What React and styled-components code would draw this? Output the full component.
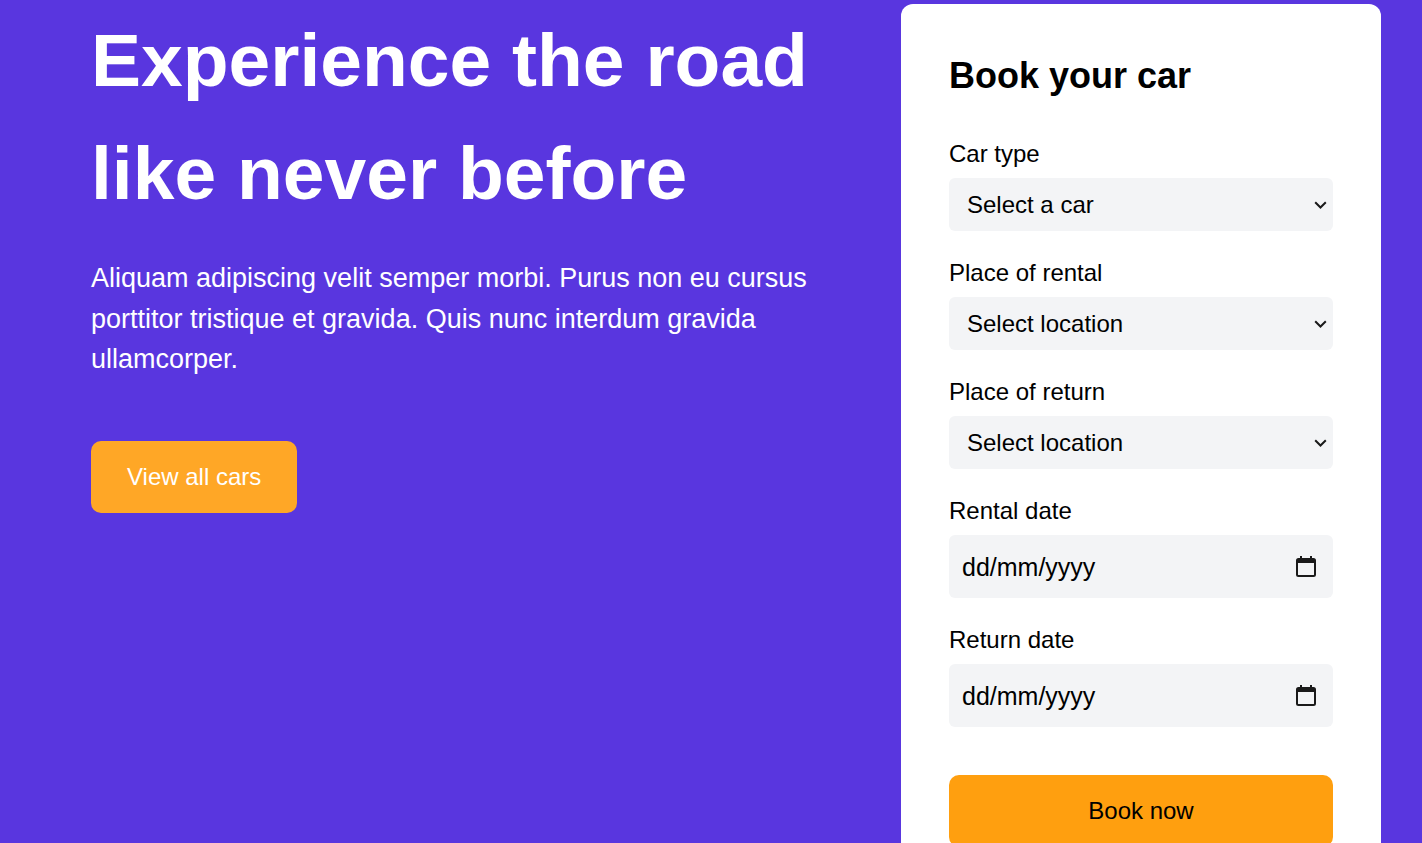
import React from "react";
import styled, { createGlobalStyle } from "styled-components";

const GlobalStyle = createGlobalStyle`
  * { box-sizing: border-box; }
  html, body { margin: 0; padding: 0; }
  body {
    background: #5936df;
    font-family: "Liberation Sans", Arial, sans-serif;
    overflow: hidden;
  }
`;

const Page = styled.main`
  display: flex;
  align-items: flex-start;
  gap: 90px;
  min-height: 843px;
  padding: 4px 41px 0 91px;
  background: #5936df;
`;

const Hero = styled.section`
  flex: 1;
  min-width: 0;
  color: #ffffff;
`;

const Headline = styled.h1`
  margin: 0;
  font-size: 75px;
  font-weight: 700;
  line-height: 1.5;
`;

const Lead = styled.p`
  margin: 29px 0 0;
  font-size: 27px;
  line-height: 40.5px;
`;

const Button = styled.button`
  display: block;
  border: none;
  border-radius: 10px;
  padding: 24px 36px;
  font-family: inherit;
  font-size: 24px;
  line-height: 24px;
  cursor: pointer;
  color: ${(p) => (p.$dark ? "#000000" : "#ffffff")};
  background: ${(p) => (p.$dark ? "#ff9f0f" : "#ffa726")};
  width: ${(p) => (p.$full ? "100%" : "auto")};
  margin-top: ${(p) => p.$mt || 0}px;
`;

const Card = styled.form`
  flex: 0 0 480px;
  background: #ffffff;
  border-radius: 12px;
  padding: 48px 48px 40px;
  min-height: 860px;
`;

const CardTitle = styled.h2`
  margin: 0 0 37px;
  font-size: 36px;
  font-weight: 700;
  line-height: 48px;
  color: #000000;
`;

const Fields = styled.div`
  display: flex;
  flex-direction: column;
  gap: 25px;
`;

const Field = styled.div`
  display: flex;
  flex-direction: column;
`;

const Label = styled.label`
  display: block;
  margin-bottom: 8px;
  font-size: 24px;
  line-height: 33px;
  color: #000000;
`;

const Control = styled.div`
  position: relative;
  display: flex;
  align-items: center;
  height: ${(p) => p.$h}px;
  border-radius: 6px;
  background: #f3f4f6;
`;

const Select = styled.select`
  appearance: none;
  -webkit-appearance: none;
  width: 100%;
  height: 100%;
  border: none;
  outline: none;
  background: transparent;
  padding: 0 40px 0 18px;
  font-family: inherit;
  font-size: 24px;
  color: #000000;
`;

const Chevron = styled.svg`
  position: absolute;
  right: 6px;
  top: 50%;
  transform: translateY(-50%);
  pointer-events: none;
`;

const DateText = styled.span`
  flex: 1;
  padding: 2px 0 0 13px;
  font-size: 25px;
  color: #000000;
`;

const CalendarIcon = styled.svg`
  margin-right: 17px;
  flex-shrink: 0;
`;

function SelectField({ label, placeholder }) {
  return (
    <Field>
      <Label>{label}</Label>
      <Control $h={53}>
        <Select defaultValue="">
          <option value="">{placeholder}</option>
        </Select>
        <Chevron width="13" height="8" viewBox="0 0 13 8" fill="none">
          <path d="M1.2 1.2 L6.5 6.5 L11.8 1.2" stroke="#1a1a1a" strokeWidth="2" />
        </Chevron>
      </Control>
    </Field>
  );
}

function DateField({ label }) {
  return (
    <Field>
      <Label>{label}</Label>
      <Control $h={63}>
        <DateText>dd/mm/yyyy</DateText>
        <CalendarIcon width="20" height="21" viewBox="0 0 20 21">
          <rect x="4" y="0" width="2" height="4" fill="#1a1a1a" />
          <rect x="14" y="0" width="2" height="4" fill="#1a1a1a" />
          <rect x="1" y="3" width="18" height="17" rx="1.5" fill="none" stroke="#1a1a1a" strokeWidth="2" />
          <rect x="1" y="3" width="18" height="4" fill="#1a1a1a" />
        </CalendarIcon>
      </Control>
    </Field>
  );
}

export default function App() {
  return (
    <>
      <GlobalStyle />
      <Page>
        <Hero>
          <Headline>Experience the road like never before</Headline>
          <Lead>
            Aliquam adipiscing velit semper morbi. Purus non eu cursus porttitor
            tristique et gravida. Quis nunc interdum gravida ullamcorper.
          </Lead>
          <Button type="button" $mt={61}>View all cars</Button>
        </Hero>
        <Card onSubmit={(e) => e.preventDefault()}>
          <CardTitle>Book your car</CardTitle>
          <Fields>
            <SelectField label="Car type" placeholder="Select a car" />
            <SelectField label="Place of rental" placeholder="Select location" />
            <SelectField label="Place of return" placeholder="Select location" />
            <DateField label="Rental date" />
            <DateField label="Return date" />
          </Fields>
          <Button type="submit" $dark $full $mt={48}>Book now</Button>
        </Card>
      </Page>
    </>
  );
}
